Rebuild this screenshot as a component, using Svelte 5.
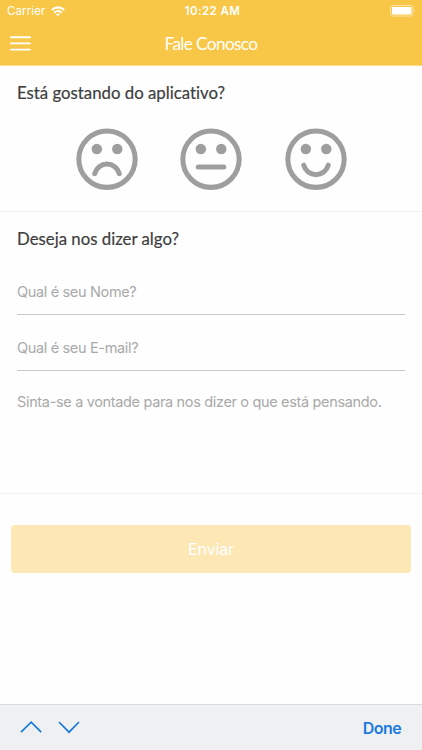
<script>
    const faces = [
        { name: "Insatisfeito", mouth: "M18.3 44.8 A12.6 12.6 0 0 1 42.7 44.8" },
        { name: "Indiferente", mouth: "M17.8 38.2 H43.2" },
        { name: "Satisfeito", mouth: "M18.3 36.4 A12.6 12.6 0 0 0 42.7 36.4" },
    ];

    let selected = $state(null);
    let name = $state("");
    let email = $state("");
    let message = $state("");
</script>

<div class="screen">
    <header>
        <div class="status-bar">
            <div class="carrier">
                <span>Carrier</span>
                <svg width="14" height="11" viewBox="0 0 14 11" fill="none" stroke="#fff" stroke-width="2">
                    <path d="M.8 4.1 Q7 -1.4 13.2 4.1" />
                    <path d="M3.2 6.7 Q7 3.4 10.8 6.7" />
                    <path d="M5 8.3 Q7 6.7 9 8.3 L7 10.5Z" fill="#fff" stroke="none" />
                </svg>
            </div>
            <span class="time">10:22 AM</span>
            <svg class="battery" width="26" height="12" viewBox="0 0 26 12">
                <rect x=".5" y=".5" width="22.5" height="10.5" rx="2.5" fill="none" stroke="#fff" stroke-opacity=".5" />
                <rect x="2" y="2" width="19.5" height="7.5" rx="1" fill="#fff" />
                <path d="M24.3 4 Q26 5.8 24.3 7.6Z" fill="#fff" fill-opacity=".5" />
            </svg>
        </div>
        <nav>
            <button class="menu" aria-label="Menu">
                <svg width="21" height="15" viewBox="0 0 21 15" stroke="#fff" stroke-width="1.9" stroke-linecap="round">
                    <path d="M1 1.2H20M1 7.4H20M1 13.6H20" />
                </svg>
            </button>
            <h1>Fale Conosco</h1>
        </nav>
    </header>

    <section class="rating">
        <h2>Está gostando do aplicativo?</h2>
        <div class="faces">
            {#each faces as face, i}
                <button aria-label={face.name} aria-pressed={selected === i} onclick={() => (selected = i)}>
                    <svg width="62" height="62" viewBox="-.3 -.5 61.6 61.6">
                        <circle cx="30.5" cy="30.5" r="28" fill="none" stroke="currentColor" stroke-width="5" />
                        <circle cx="20.4" cy="20.4" r="5.2" fill="currentColor" />
                        <circle cx="40.7" cy="20.4" r="5.2" fill="currentColor" />
                        <path
                            d={face.mouth}
                            fill="none"
                            stroke="currentColor"
                            stroke-width="5"
                            stroke-linecap="round"
                        />
                    </svg>
                </button>
            {/each}
        </div>
    </section>

    <section class="contact">
        <h2>Deseja nos dizer algo?</h2>
        <input class="name" type="text" placeholder="Qual é seu Nome?" bind:value={name} />
        <input class="email" type="email" placeholder="Qual é seu E-mail?" bind:value={email} />
        <textarea
            placeholder="Sinta-se a vontade para nos dizer o que está pensando."
            bind:value={message}
        ></textarea>
    </section>

    <div class="actions">
        <button class="send">Enviar</button>
    </div>

    <footer>
        <div class="arrows">
            <svg width="22" height="13" viewBox="0 0 22 13"><path d="M1 11.2 L11.2 1.2 L21.2 11.2" /></svg>
            <svg width="22" height="13" viewBox="0 0 22 13"><path d="M1 1 L11 11.2 L21 1" /></svg>
        </div>
        <button class="done">Done</button>
    </footer>
</div>

<style>
    :global(body) {
        background: #fff;
    }

    .screen {
        display: flex;
        flex-direction: column;
        width: 422px;
        height: 750px;
        overflow: hidden;
        background: #fefefe;
        font-family: Inter, "Liberation Sans", sans-serif;
    }

    button {
        padding: 0;
        border: 0;
        background: none;
        font: inherit;
    }

    svg {
        display: block;
    }

    header {
        box-sizing: border-box;
        height: 66px;
        background: #f9c747;
        border-bottom: 1px solid #fbdc8e;
        color: #fff;
    }

    .status-bar {
        display: grid;
        grid-template-columns: 1fr auto 1fr;
        align-items: center;
        height: 22px;
        padding: 0 6px 0 7px;
        font-size: 11.5px;
    }

    .carrier {
        display: flex;
        align-items: center;
        gap: 6px;
        letter-spacing: 0.1px;
    }

    .time {
        padding-left: 2px;
        font-weight: 600;
        letter-spacing: 0.4px;
    }

    .battery {
        justify-self: end;
    }

    nav {
        display: grid;
        grid-template-columns: 1fr auto 1fr;
        align-items: center;
        height: 43px;
        padding: 0 10px;
    }

    h1 {
        margin: 0;
        font-family: Lato, sans-serif;
        font-size: 17.3px;
        font-weight: 400;
        letter-spacing: -0.65px;
    }

    section {
        box-sizing: border-box;
        border-bottom: 1px solid #f1f1f1;
    }

    h2 {
        margin: 0;
        font-family: Lato, sans-serif;
        font-size: 16.8px;
        font-weight: 400;
        font-variant-ligatures: none;
        line-height: 22px;
        color: #3e3e3e;
        -webkit-text-stroke: 0.2px #3e3e3e;
    }

    .rating {
        height: 146px;
        padding: 16px 17px 0;
    }

    .faces {
        display: flex;
        justify-content: center;
        gap: 42.5px;
        padding-top: 24px;
    }

    .faces button {
        color: #9e9e9e;
    }

    .contact {
        display: flex;
        flex-direction: column;
        height: 282px;
        padding: 16px 17px 0;
    }

    input,
    textarea {
        box-sizing: border-box;
        width: 100%;
        padding: 0;
        border: 0;
        border-radius: 0;
        outline: 0;
        background: none;
        font: 14.5px Inter, "Liberation Sans", sans-serif;
        letter-spacing: -0.34px;
    }

    input {
        height: 56px;
        padding-top: 9px;
        border-bottom: 1px solid #c9c9c9;
    }

    .name {
        height: 65px;
        padding-top: 18px;
    }

    textarea {
        height: 100px;
        padding-top: 21px;
        line-height: 20px;
        resize: none;
    }

    ::placeholder {
        color: #a9a9a9;
        opacity: 1;
    }

    .actions {
        flex: 1;
        padding: 31px 11px 0;
    }

    .send {
        width: 400px;
        height: 48px;
        border-radius: 4px;
        background: #fde8b5;
        color: #fff;
        font-size: 16px;
        letter-spacing: -0.15px;
    }

    footer {
        box-sizing: border-box;
        display: flex;
        justify-content: space-between;
        align-items: center;
        height: 46px;
        padding: 0 21px 0 20px;
        border-top: 1px solid #d9dadb;
        background: #eff0f1;
    }

    .arrows {
        display: flex;
        gap: 16px;
    }

    .arrows path {
        fill: none;
        stroke: #1b7ae0;
        stroke-width: 1.7;
    }

    .done {
        color: #1b7ae0;
        font-size: 16px;
        font-weight: 600;
        letter-spacing: -0.6px;
    }
</style>
